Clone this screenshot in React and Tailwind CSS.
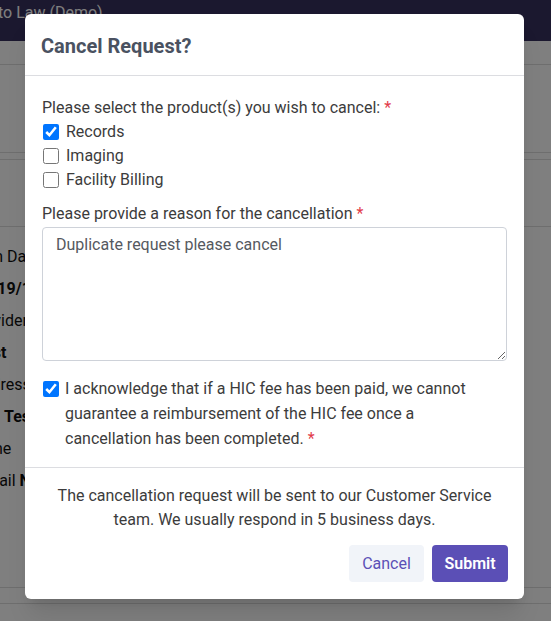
import React, { useState } from 'react';

const font = { fontFamily: 'Roboto, "Noto Sans", sans-serif' };

function BackgroundPage() {
  return (
    <div className="w-[551px] h-[621px] bg-white overflow-hidden flex flex-col" style={font}>
      <div className="h-[41px] shrink-0 bg-[#37305f] text-white text-[16px] leading-[24px] pt-[1px] -ml-[2px] whitespace-nowrap">
        to Law (Demo)
      </div>
      <div className="h-[24px] shrink-0 border-b border-[#dcdcdc]"></div>
      <div className="h-[88px] shrink-0 border-b border-[#dcdcdc]"></div>
      <div className="h-[7px] shrink-0 border-b border-[#dcdcdc]"></div>
      <div className="h-[67px] shrink-0 border-b border-[#dcdcdc]"></div>
      <div className="flex flex-col pt-[18px] gap-[8px] text-[16px] text-[#111] leading-[24px] whitespace-nowrap">
        <div className="-ml-[57px]">Creation Date</div>
        <div className="-ml-[21px] font-bold">2019/12/03</div>
        <div className="-ml-[31px]">Provider</div>
        <div className="-ml-[25px] font-bold">Test</div>
        <div className="-ml-[28px]">Address</div>
        <div className="ml-[4px] font-bold">Test</div>
        <div className="-ml-[34px]">Phone</div>
        <div className="-ml-[24px]">Email <span className="font-bold">N/A</span></div>
      </div>
      <div className="mt-auto h-[17px] shrink-0 border-t border-b border-[#dcdcdc] mb-[17px]"></div>
    </div>
  );
}

export default function App() {
  const [products, setProducts] = useState({ records: true, imaging: false, billing: false });
  const [reason, setReason] = useState('Duplicate request please cancel');
  const [ack, setAck] = useState(true);

  const toggle = (key) => setProducts({ ...products, [key]: !products[key] });

  const items = [
    { key: 'records', label: 'Records' },
    { key: 'imaging', label: 'Imaging' },
    { key: 'billing', label: 'Facility Billing' },
  ];

  return (
    <div className="relative w-[551px] h-[621px] overflow-hidden" style={font}>
      <BackgroundPage />
      <div className="absolute inset-0 bg-black/50"></div>
      <div className="absolute left-[25px] top-[14px] w-[499px] bg-white rounded-[6px] shadow-xl flex flex-col">
        <div className="h-[62px] flex items-center px-[16px] pt-[3px] border-b border-[#dcdde1]">
          <h2 className="text-[20px] font-bold text-[#4a5261]">Cancel Request?</h2>
        </div>

        <div className="px-[17px] pt-[20px] pb-[16px] text-[16px] text-[#3c3c3c] border-b border-[#dcdde1]">
          <div className="leading-[24px]">
            Please select the product(s) you wish to cancel: <span className="text-[#e23b4a]">*</span>
          </div>
          <div className="flex flex-col">
            {items.map((item) => (
              <label key={item.key} className="flex items-center gap-[7px] h-[24px] leading-[24px] cursor-pointer">
                <input
                  type="checkbox"
                  checked={products[item.key]}
                  onChange={() => toggle(item.key)}
                  className="w-[16px] h-[16px] m-0 ml-[1px] accent-[#0075ff]"
                />
                <span>{item.label}</span>
              </label>
            ))}
          </div>

          <div className="mt-[10px] leading-[24px]">
            Please provide a reason for the cancellation <span className="text-[#e23b4a]">*</span>
          </div>
          <textarea
            value={reason}
            onChange={(e) => setReason(e.target.value)}
            className="mt-[1px] block w-full h-[134px] border border-[#ced2d9] rounded-[4px] px-[13px] py-[5px] text-[16px] leading-[24px] text-[#55595f] outline-none resize-y"
            style={font}
          />

          <label className="mt-[15px] flex items-start gap-[6px] leading-[25px] cursor-pointer">
            <input
              type="checkbox"
              checked={ack}
              onChange={() => setAck(!ack)}
              className="w-[16px] h-[16px] m-0 mt-[5px] ml-[1px] shrink-0 accent-[#0075ff]"
            />
            <span className="pr-[40px]">
              I acknowledge that if a HIC fee has been paid, we cannot guarantee a reimbursement of the HIC fee once a cancellation has been completed. <span className="text-[#e23b4a]">*</span>
            </span>
          </label>
        </div>

        <div className="px-[16px] pt-[16px] pb-[17px]">
          <p className="text-center text-[16px] leading-[24px] text-[#3c3c3c] px-[16px]">
            The cancellation request will be sent to our Customer Service team. We usually respond in 5 business days.
          </p>
          <div className="mt-[13px] flex justify-end gap-[8px]">
            <button className="h-[37px] w-[75px] rounded-[4px] bg-[#f1f4f9] text-[#5b50b6] text-[16px]">Cancel</button>
            <button className="h-[37px] w-[76px] rounded-[4px] bg-[#5b4fb6] text-white text-[16px] font-semibold">Submit</button>
          </div>
        </div>
      </div>
    </div>
  );
}
